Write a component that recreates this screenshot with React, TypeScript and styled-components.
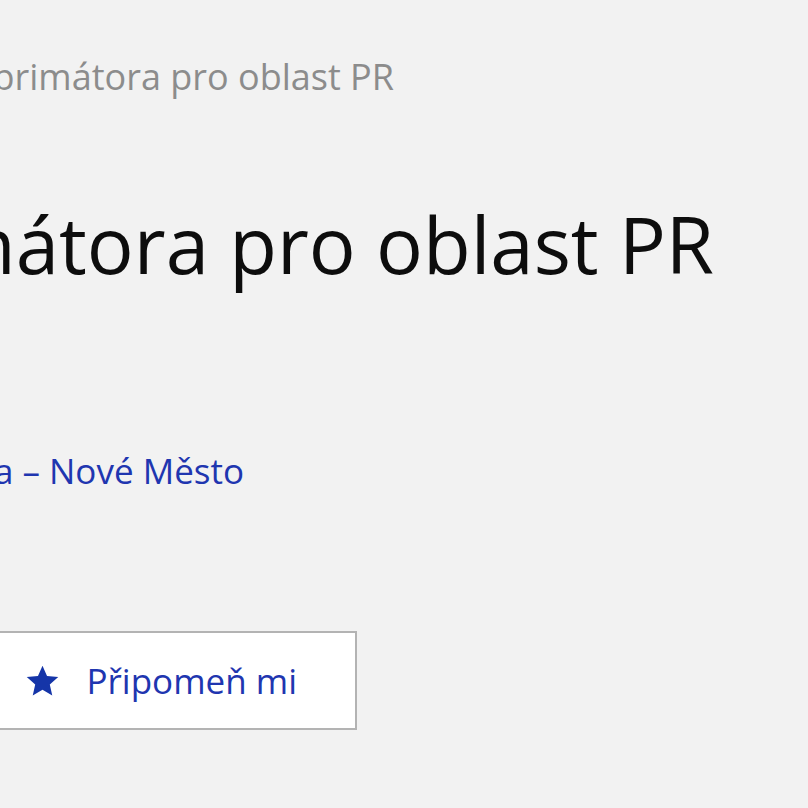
import React from "react";
import styled, { createGlobalStyle } from "styled-components";

const GlobalStyle = createGlobalStyle`
  html, body {
    margin: 0;
    padding: 0;
    background: #f2f2f2;
    font-family: "Open Sans", "Noto Sans", sans-serif;
    overflow: hidden;
  }
`;

const Page = styled.div`
  width: 808px;
  height: 808px;
  overflow: hidden;
  display: flex;
  flex-direction: column;
`;

/* row whose content ends at a given x; overflow spills past the left edge */
const Row = styled.div<{ $end: number; $top: number }>`
  display: flex;
  justify-content: flex-end;
  width: ${(p) => p.$end}px;
  margin-top: ${(p) => p.$top}px;
  white-space: nowrap;
`;

const Breadcrumb = styled.span`
  font-size: 36px;
  line-height: 1.2;
  color: #8c8c8c;
`;

const Title = styled.h1`
  margin: 0;
  font-size: 78px;
  line-height: 1.2;
  font-weight: 400;
  color: #0d0d0d;
`;

const Location = styled.a`
  font-size: 35px;
  line-height: 1.2;
  color: #1f36b0;
  text-decoration: none;
`;

const RemindButton = styled.button`
  display: flex;
  align-items: center;
  gap: 26px;
  height: 99px;
  padding: 0 58px 0 60px;
  background: #fff;
  border: 2px solid #b3b3b3;
  font-family: inherit;
  font-size: 35px;
  color: #1f36b0;
  cursor: pointer;
`;

const Star = () => (
  <svg width="35" height="35" viewBox="0 0 24 24" fill="#1535a8">
    <path d="M12 1.8l3.1 7.1 7.7.7-5.8 5.1 1.7 7.6L12 18.3l-6.7 4 1.7-7.6-5.8-5.1 7.7-.7z" />
  </svg>
);

export default function App() {
  return (
    <Page>
      <GlobalStyle />
      <Row $end={394} $top={55}>
        <Breadcrumb>Asistent/ka primátora pro oblast PR</Breadcrumb>
      </Row>
      <Row $end={714} $top={100}>
        <Title>Asistent/ka primátora pro oblast PR</Title>
      </Row>
      <Row $end={244} $top={158}>
        <Location href="#">Praha – Nové Město</Location>
      </Row>
      <Row $end={357} $top={139}>
        <RemindButton>
          <Star />
          Připomeň mi
        </RemindButton>
      </Row>
    </Page>
  );
}
